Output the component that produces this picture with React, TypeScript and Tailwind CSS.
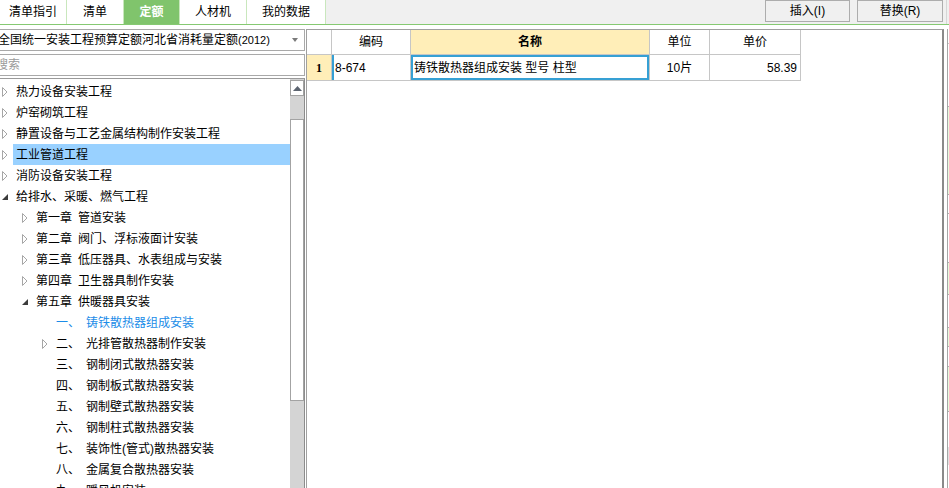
import React from 'react'

type TreeRow = {
  level: 0 | 1 | 2
  icon: 'closed' | 'open' | 'none'
  head?: string
  text: string
  selected?: boolean
  active?: boolean
}

const tabs = [
  { label: '清单指引', w: 'w-[67px]' },
  { label: '清单', w: 'w-[57px]' },
  { label: '定额', w: 'w-[56px]', on: true },
  { label: '人材机', w: 'w-[67px]' },
  { label: '我的数据', w: 'w-[79px]' },
]

const rows: TreeRow[] = [
  { level: 0, icon: 'closed', text: '热力设备安装工程' },
  { level: 0, icon: 'closed', text: '炉窑砌筑工程' },
  { level: 0, icon: 'closed', text: '静置设备与工艺金属结构制作安装工程' },
  { level: 0, icon: 'closed', text: '工业管道工程', selected: true },
  { level: 0, icon: 'closed', text: '消防设备安装工程' },
  { level: 0, icon: 'open', text: '给排水、采暖、燃气工程' },
  { level: 1, icon: 'closed', head: '第一章', text: '管道安装' },
  { level: 1, icon: 'closed', head: '第二章', text: '阀门、浮标液面计安装' },
  { level: 1, icon: 'closed', head: '第三章', text: '低压器具、水表组成与安装' },
  { level: 1, icon: 'closed', head: '第四章', text: '卫生器具制作安装' },
  { level: 1, icon: 'open', head: '第五章', text: '供暖器具安装' },
  { level: 2, icon: 'none', head: '一、', text: '铸铁散热器组成安装', active: true },
  { level: 2, icon: 'closed', head: '二、', text: '光排管散热器制作安装' },
  { level: 2, icon: 'none', head: '三、', text: '钢制闭式散热器安装' },
  { level: 2, icon: 'none', head: '四、', text: '钢制板式散热器安装' },
  { level: 2, icon: 'none', head: '五、', text: '钢制壁式散热器安装' },
  { level: 2, icon: 'none', head: '六、', text: '钢制柱式散热器安装' },
  { level: 2, icon: 'none', head: '七、', text: '装饰性(管式)散热器安装' },
  { level: 2, icon: 'none', head: '八、', text: '金属复合散热器安装' },
  { level: 2, icon: 'none', head: '九、', text: '暖风机安装' },
]

const indent = ['pl-[2px]', 'pl-[22px]', 'pl-[42px]']

const Caret = ({ kind }: { kind: TreeRow['icon'] }) => {
  if (kind === 'closed')
    return (
      <svg width="6" height="10" viewBox="0 0 6 10">
        <polygon points="0.5,0.5 5,5 0.5,9.5" fill="#fff" stroke="#a6a6a6" />
      </svg>
    )
  if (kind === 'open')
    return (
      <svg width="6" height="6" viewBox="0 0 6 6">
        <polygon points="6,0 6,6 0,6" fill="#3c3c3c" />
      </svg>
    )
  return null
}

const Row = ({ row }: { row: TreeRow }) => (
  <div className={`flex h-[21px] items-center ${indent[row.level]}`}>
    <div className="flex w-[11px] items-center">
      <Caret kind={row.icon} />
    </div>
    <div
      className={`flex h-[21px] flex-1 items-center pl-[3px] ${row.selected ? 'bg-[#99d1ff]' : ''} ${
        row.active ? 'text-[#1b8ce8]' : 'text-black'
      }`}
    >
      {row.level === 2 && <span className="w-[30px]">{row.head}</span>}
      {row.level === 1 && <span className="mr-[6px]">{row.head}</span>}
      <span>{row.text}</span>
    </div>
  </div>
)

const Cell = ({ w, className = '', children }: { w: string; className?: string; children?: React.ReactNode }) => (
  <div className={`flex h-full shrink-0 items-center border-r border-b border-[#c6c6c6] ${w} ${className}`}>{children}</div>
)

export default function App() {
  return (
    <div className="flex h-[488px] w-[949px] flex-col overflow-hidden bg-white font-['Liberation_Sans','Noto_Sans_CJK_SC',sans-serif] text-[12px] text-black">
      {/* tab bar */}
      <div className="flex h-[25px] shrink-0 border-b border-[#86c972] bg-[#f0f0f0]">
        {tabs.map((t) => (
          <div
            key={t.label}
            className={`flex h-full items-center justify-center border-r border-[#c9e7bd] ${t.w} ${
              t.on ? 'bg-[#80c46c] font-bold text-white' : 'bg-white'
            }`}
          >
            {t.label}
          </div>
        ))}
        <div className="flex-1" />
        <button className="h-[22px] w-[85px] border border-[#adadad] bg-[#f0f0f0]">插入(I)</button>
        <button className="ml-[7px] h-[22px] w-[86px] border border-[#adadad] bg-[#f0f0f0]">替换(R)</button>
        <div className="ml-[3px] w-[3px] border-l border-[#d6d6d6]" />
      </div>

      <div className="flex min-h-0 flex-1 pt-[4px]">
        {/* left panel */}
        <div className="flex w-[305px] shrink-0 flex-col">
          <div className="flex h-[22px] items-center overflow-hidden border-y border-r border-[#a9a9a9] bg-white">
            <span className="-ml-[2px] whitespace-nowrap">
              全国统一安装工程预算定额河北省消耗量定额<span className="text-[11px]">(2012)</span>
            </span>
            <div className="flex-1" />
            <svg width="6" height="4" viewBox="0 0 6 4" className="mr-[6px]">
              <polygon points="0,0 6,0 3,4" fill="#7a7a7a" />
            </svg>
          </div>
          <div className="mt-[3px] flex h-[22px] items-center overflow-hidden border-y border-r border-[#a9a9a9] bg-white">
            <span className="-ml-[4px] text-[#9a9a9a]">搜索</span>
          </div>
          <div className="mt-[2px] flex min-h-0 flex-1 border-t border-r border-[#9a9a9a] border-r-[#8c8c8c]">
            <div className="flex-1 overflow-hidden pt-[2px]">
              {rows.map((r) => (
                <Row key={r.text} row={r} />
              ))}
            </div>
            <div className="flex w-[14px] flex-col bg-[#d4d4d4] pt-[1px]">
              <div className="flex h-[16px] items-center justify-center border border-[#a3a3a3] bg-white">
                <svg width="9" height="5" viewBox="0 0 9 5">
                  <polygon points="4.5,0 9,5 0,5" fill="#5c6470" />
                </svg>
              </div>
              <div className="mt-[23px] h-[282px] border border-[#a3a3a3] bg-white" />
            </div>
          </div>
        </div>

        {/* main grid */}
        <div className="ml-[1px] flex w-[638px] shrink-0 flex-col border-t border-l border-r-2 border-[#a0a0a0] border-r-[#8a8a8a] bg-white">
          <div className="flex h-[25px]">
            <Cell w="w-[25px]" />
            <Cell w="w-[79px]" className="justify-center">编码</Cell>
            <Cell w="w-[239px]" className="justify-center bg-[#ffeeb8] font-bold">名称</Cell>
            <Cell w="w-[60px]" className="justify-center">单位</Cell>
            <Cell w="w-[91px]" className="justify-center">单价</Cell>
          </div>
          <div className="flex h-[26px]">
            <Cell w="w-[25px]" className="justify-center bg-[#ffeeb8] font-['Liberation_Serif',serif] font-bold">1</Cell>
            <Cell w="w-[79px]" className="pl-[3px] shadow-[inset_2px_0_0_#36a0d4]">8-674</Cell>
            <Cell w="w-[239px]" className="pl-[3px] shadow-[inset_0_0_0_2px_#36a0d4]">铸铁散热器组成安装 型号 柱型</Cell>
            <Cell w="w-[60px]" className="justify-center">10片</Cell>
            <Cell w="w-[91px]" className="justify-end pr-[3px]">58.39</Cell>
          </div>
        </div>

        {/* right edge strip */}
        <div className="ml-[3px] flex w-[3px] flex-col border-l border-[#a6a6a6]">
          <div className="h-[15px] border-b border-[#c8c8c8]" />
          <div className="h-[62px]" />
          <div className="h-[89px] border-y border-[#b0b0b0] bg-[#e8fbdc]" />
          <div className="h-[19px] border-b border-[#b0b0b0]" />
          <div className="h-[48px]" />
          <div className="h-[33px] border-y border-[#b0b0b0] bg-[#e8fbdc]" />
          <div className="h-[32px]" />
          <div className="h-[20px] border-y border-[#b0b0b0] bg-[#e8fbdc]" />
          <div className="h-[19px]" />
          <div className="h-[46px] border-y border-[#b0b0b0] bg-[#e8fbdc]" />
          <div className="h-[35px]" />
          <div className="h-[18px] bg-[#e2e2e2]" />
        </div>
      </div>
    </div>
  )
}
